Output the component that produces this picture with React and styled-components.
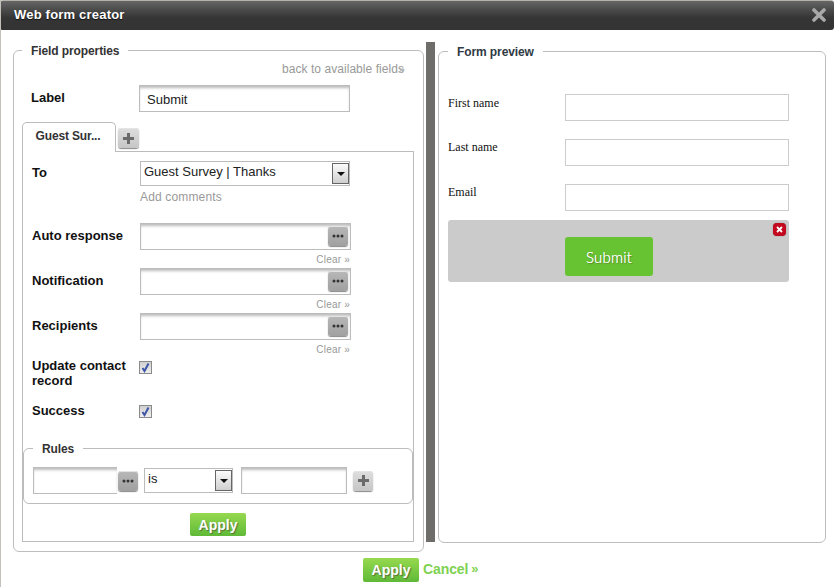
import React from "react";
import styled, { createGlobalStyle } from "styled-components";

const Global = createGlobalStyle`
  html, body { margin: 0; padding: 0; background: #fff; }
  body { font-family: "Liberation Sans", Arial, sans-serif; }
  * { box-sizing: border-box; }
`;

const Dialog = styled.div`
  width: 834px; height: 587px; background: #fff; overflow: hidden;
  border-left: 1px solid #c4c1bb;
  display: flex; flex-direction: column;
`;
const Header = styled.header`
  height: 30px; flex: none; margin-left: -1px;
  display: flex; align-items: center; justify-content: space-between;
  padding: 0 8px 2px 14px;
  border-top: 1px solid #b5b2ab;
  border-radius: 3px;
  background: linear-gradient(#666 0, #4a4a4a 9px, #353535 17px, #333 100%);
  color: #fff; font-size: 13px; letter-spacing: .2px; font-weight: bold;
`;
const Title = styled.span`text-shadow: 0 1px 1px #111;`;
const Main = styled.main`
  display: flex; align-items: flex-start; padding: 12px 0 0 12px; flex: none;
`;
const Group = styled.fieldset`
  margin: 0; min-width: 0; min-inline-size: 0;
  border: 1px solid #bdbdbd; border-radius: 6px;
  width: ${p => p.$w}px;
  height: ${p => p.$h}px;
  padding: ${p => p.$pad};
  margin-top: ${p => p.$top || 0}px;
`;
const Legend = styled.legend`
  margin-left: 0; padding: 2px 9px 0;
  font-size: 12px; line-height: 14px; letter-spacing: -.1px; font-weight: bold; color: #333;
`;
const PreviewLegend = styled(Legend)`
  color: #2f3a45;
`;
const BackLink = styled.a`
  display: block; margin-top: 4px; height: 14px; line-height: 14px;
  font-size: 12px; letter-spacing: .05px; color: #999; text-align: right; padding-right: 10px;
  white-space: nowrap; position: relative;
  &::after { content: "»"; position: absolute; right: 9px; top: 0; color: #aaa; font-size: 11px; }
`;
const LabelRow = styled.div`
  display: flex; margin: 9px 0 0 0; padding-left: 9px;
`;
const MainLabel = styled.label`
  width: 108px; font-size: 13px; font-weight: bold; color: #111; line-height: 15px; padding-top: 5px;
`;
const TextBox = styled.input`
  display: block; width: ${p => p.$w}px; height: 27px; padding: 1px 7px;
  border: 1px solid #bcbcbc; border-radius: 0; outline: none;
  box-shadow: inset 0 3px 3px -1px #bbb;
  font: 12px "Liberation Sans", Arial, sans-serif; color: #222; background: #fff;
  ${p => p.$open && "border-right: none;"}
`;
const SubmitLabel = styled(TextBox)`
  font-size: 13px; padding-top: 3px;
`;
const Tabs = styled.div`
  display: flex; align-items: flex-start; margin-top: 10px; height: 30px; margin-bottom: -1px;
`;
const Tab = styled.div`
  width: 94px; height: 30px; padding: 6px 2px 0 0; text-align: center; position: relative; z-index: 1;
  border: 1px solid #bcbcbc; border-bottom: none; border-radius: 5px 5px 0 0; background: #fff;
  font-size: 12px; line-height: 15px; letter-spacing: -.15px; font-weight: bold; color: #333;
`;
const SquareBtn = styled.button`
  width: ${p => p.$w || 20}px; height: ${p => p.$h || 20}px; flex: none; padding: 0;
  margin-left: ${p => p.$ml || 0}px;
  display: flex; align-items: center; justify-content: center;
  border: none; border-radius: 3px;
  background: ${p => p.$dark ? "linear-gradient(#b8b8b8,#a0a0a0)" : "linear-gradient(#dedede,#c6c6c6)"};
  box-shadow: 0 1px 1px #888, inset 0 1px 0 #e4e4e4;
`;
const PlusSlot = styled.div`margin: 6px 0 0 2px;`;
const Panel = styled.section`
  width: 392px; height: 391px; border: 1px solid #bcbcbc; padding: 9px 0 5px 9px;
  display: flex; flex-direction: column;
`;
const Field = styled.div`
  display: grid; grid-template-columns: 108px 211px;
  margin-top: ${p => p.$mt || 0}px;
  margin-bottom: ${p => p.$mb || 0}px;
`;
const FieldLabel = styled.label`
  font-size: 13px; font-weight: bold; line-height: 15px; color: #111; padding-top: ${p => p.$pt ?? 5}px;
`;
const Select = styled.div`
  width: ${p => p.$w}px; height: ${p => p.$h}px; flex: none;
  margin-left: ${p => p.$ml || 0}px;
  border: 1px solid #bcbcbc; background: #fff; padding: 1px 0 1px 3px;
  display: flex; justify-content: space-between;
  font-size: 13px; line-height: 17px; color: #222;
`;
const SelectArrow = styled.span`
  width: 17px; flex: none; align-self: stretch;
  border: 1px solid #666; background: linear-gradient(#fbfbfb, #cfcfcf);
  display: flex; align-items: center; justify-content: center;
  &::before { content: ""; border: 4px solid transparent; border-top: 4px solid #111; border-bottom: none; }
`;
const SubLink = styled.a`
  display: block; font-size: 12px; letter-spacing: .15px; line-height: 14px; color: #999; margin-top: 4px;
  grid-column: 2;
`;
const LookupWrap = styled.div`
  position: relative; width: 211px; height: 27px;
`;
const LookupBtn = styled(SquareBtn)`
  position: absolute; right: 3px; top: 3px;
`;
const ClearLink = styled.a`
  display: block; grid-column: 2; text-align: right; font-size: 10px; line-height: 14px;
  letter-spacing: .2px; color: #999; margin-top: 3px; padding-right: 1px;
`;
const Check = styled.span`
  width: 13px; height: 13px; margin: ${p => p.$mt}px 0 0 -1px; display: flex; align-items: center; justify-content: center;
  border: 1px solid #8a8a8a; background: linear-gradient(#d0d0d0, #eee);
`;
const RulesGroup = styled.fieldset`
  margin: 23px 0 0 -9px; padding: 12px 0 8px 9px; width: 390px; height: 63px; min-width: 0;
  border: 1px solid #bcbcbc; border-radius: 6px;
`;
const RulesLegend = styled(Legend)`padding: 2px 9px 0; line-height: 12px;`;
const RuleRow = styled.div`display: flex; align-items: center;`;
const RuleInput = styled(TextBox)`margin-left: ${p => p.$ml || 0}px;`;
const ApplySmall = styled.button`
  display: block; width: ${p => p.$w}px; height: ${p => p.$h}px; padding: 0;
  border: none; border-radius: 2px; 
  background: linear-gradient(#96d94f, #5fb937);
  color: #fff; font: bold 14px "Liberation Sans", Arial, sans-serif;
  text-shadow: 1px 1px 1px #55703a;
`;
const PanelApply = styled(ApplySmall)`align-self: center; margin: 9px 0 0 -9px;`;
const Divider = styled.div`width: 9px; height: 500px; background: #6f6d6a; margin: 0 3px 0 2px; flex: none;`;
const Footer = styled.footer`
  display: flex; align-items: center; padding: 6px 0 0 362px; height: 30px;
`;
const CancelLink = styled.a`
  font-size: 14px; font-weight: bold; color: #7ed24f; margin: -2px 0 0 4px; white-space: nowrap; letter-spacing: -.1px;
  & > span { font-size: 13px; margin-left: 3px; vertical-align: 1px; }
`;
const PreviewList = styled.div`
  display: flex; flex-direction: column; padding-top: 35px;
`;
const PreviewRow = styled.div`
  display: grid; grid-template-columns: 117px 224px; height: ${p => p.$h}px;
`;
const SerifLabel = styled.label`
  font: 12px/14px "Liberation Serif", "Times New Roman", serif; color: #111; padding-top: ${p => p.$pt}px;
`;
const PreviewInput = styled.input`
  display: block; width: 224px; height: 27px; border: 1px solid #ccc; background: #fff; outline: none; padding: 0;
`;
const SubmitStage = styled.div`
  position: relative; width: 341px; height: 62px; background: #cbcbcb; border-radius: 3px;
  padding: 17px 0 0 117px; margin-top: -1px;
`;
const SubmitBtn = styled.button`
  display: block; width: 88px; height: 39px; border: none; border-radius: 3px; background: #67c332; padding: 0;
  color: #fff; font: 300 15px Lato, "Open Sans", sans-serif; letter-spacing: .2px;
  text-shadow: 0 0 .6px #fff, 1px 1px 1px #5a7a30;
`;
const RemoveBadge = styled.span`
  position: absolute; right: 3px; top: 3px; width: 13px; height: 13px; border-radius: 4px; background: #c4091f;
  display: flex; align-items: center; justify-content: center; box-shadow: 0 0 1px #555;
`;

const Dots = () => (
  <svg width="12" height="4" viewBox="0 0 12 4"><g fill="#333"><circle cx="2" cy="2" r="1.5"/><circle cx="6" cy="2" r="1.5"/><circle cx="10" cy="2" r="1.5"/></g></svg>
);
const PlusIcon = () => (
  <svg width="11" height="11" viewBox="0 0 11 11"><path d="M4 0h3v4h4v3H7v4H4V7H0V4h4z" fill="#6b6b6b"/></svg>
);
const Tick = () => (
  <svg width="11" height="11" viewBox="0 0 11 11"><path d="M2.5 6l2 3L8.5 1.5" fill="none" stroke="#3f55a5" strokeWidth="2"/></svg>
);
const CloseX = () => (
  <svg width="14" height="14" viewBox="0 0 14 14"><path d="M2 2l10 10M12 2L2 12" stroke="#a8a8a8" strokeWidth="3.6" strokeLinecap="round"/></svg>
);
const SmallX = () => (
  <svg width="7" height="7" viewBox="0 0 7 7"><path d="M1 1l5 5M6 1L1 6" stroke="#fff" strokeWidth="1.8"/></svg>
);

const Lookup = () => (
  <LookupWrap>
    <TextBox $w={211} />
    <LookupBtn $dark><Dots /></LookupBtn>
  </LookupWrap>
);

export default function App() {
  return (
    <Dialog>
      <Global />
      <Header>
        <Title>Web form creator</Title>
        <CloseX />
      </Header>
      <Main>
        <Group $w={411} $h={510} $pad="0 9px 9px 8px">
          <Legend>Field properties</Legend>
          <BackLink>back to available fields</BackLink>
          <LabelRow>
            <MainLabel>Label</MainLabel>
            <SubmitLabel $w={211} defaultValue="Submit" />
          </LabelRow>
          <Tabs>
            <Tab>Guest Sur...</Tab>
            <PlusSlot><SquareBtn $w={21}><PlusIcon /></SquareBtn></PlusSlot>
          </Tabs>
          <Panel>
            <Field>
              <FieldLabel $pt={4}>To</FieldLabel>
              <Select $w={210} $h={25}>Guest Survey | Thanks<SelectArrow /></Select>
              <SubLink>Add comments</SubLink>
            </Field>
            <Field $mt={19} $mb={1}>
              <FieldLabel>Auto response</FieldLabel>
              <Lookup />
              <ClearLink>Clear »</ClearLink>
            </Field>
            <Field $mb={1}>
              <FieldLabel>Notification</FieldLabel>
              <Lookup />
              <ClearLink>Clear »</ClearLink>
            </Field>
            <Field $mb={1}>
              <FieldLabel>Recipients</FieldLabel>
              <Lookup />
              <ClearLink>Clear »</ClearLink>
            </Field>
            <Field $mb={15}>
              <FieldLabel $pt={0}>Update contact record</FieldLabel>
              <Check $mt={3}><Tick /></Check>
            </Field>
            <Field>
              <FieldLabel $pt={0}>Success</FieldLabel>
              <Check $mt={2}><Tick /></Check>
            </Field>
            <RulesGroup>
              <RulesLegend>Rules</RulesLegend>
              <RuleRow>
                <TextBox $w={84} $open />
                <SquareBtn $dark $ml={1}><Dots /></SquareBtn>
                <Select $w={89} $h={25} $ml={6}>is<SelectArrow /></Select>
                <RuleInput $w={106} $ml={8} />
                <SquareBtn $ml={6}><PlusIcon /></SquareBtn>
              </RuleRow>
            </RulesGroup>
            <PanelApply $w={56} $h={23}>Apply</PanelApply>
          </Panel>
        </Group>
        <Divider />
        <Group $w={388} $h={500} $top={1} $pad="0 0 0 9px">
          <PreviewLegend>Form preview</PreviewLegend>
          <PreviewList>
            <PreviewRow $h={45}><SerifLabel $pt={2}>First name</SerifLabel><PreviewInput /></PreviewRow>
            <PreviewRow $h={45}><SerifLabel $pt={1}>Last name</SerifLabel><PreviewInput /></PreviewRow>
            <PreviewRow $h={37}><SerifLabel $pt={1}>Email</SerifLabel><PreviewInput /></PreviewRow>
            <SubmitStage>
              <SubmitBtn>Submit</SubmitBtn>
              <RemoveBadge><SmallX /></RemoveBadge>
            </SubmitStage>
          </PreviewList>
        </Group>
      </Main>
      <Footer>
        <ApplySmall $w={56} $h={24}>Apply</ApplySmall>
        <CancelLink>Cancel<span>»</span></CancelLink>
      </Footer>
    </Dialog>
  );
}
